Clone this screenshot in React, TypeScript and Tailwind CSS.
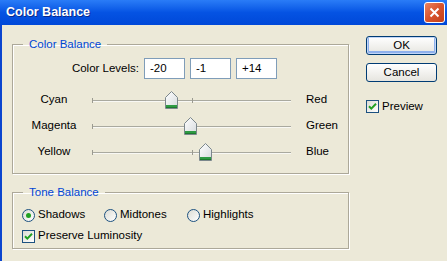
import React from 'react';

const levels = [
  { left: 'Cyan', right: 'Red', value: -20 },
  { left: 'Magenta', right: 'Green', value: -1 },
  { left: 'Yellow', right: 'Blue', value: 14 },
];

const TRACK_W = 199;

const Thumb = ({ value }: { value: number }) => {
  const x = ((value + 100) / 200) * TRACK_W;
  return (
    <svg
      width="13"
      height="18"
      viewBox="0 0 13 18"
      className="absolute top-[4px]"
      style={{ left: Math.round(x - 6.5) }}
    >
      <defs>
        <linearGradient id="thumbFill" x1="0" y1="0" x2="1" y2="1">
          <stop offset="0" stopColor="#ffffff" />
          <stop offset="1" stopColor="#d5dadd" />
        </linearGradient>
      </defs>
      <path d="M6.5 0.5 L12.5 6.5 V17.5 H0.5 V6.5 Z" fill="url(#thumbFill)" stroke="#7b878c" />
      <rect x="1" y="14" width="11" height="3" fill="#2e9a43" />
      <rect x="1" y="16" width="11" height="1" fill="#1d7a2f" />
    </svg>
  );
};

const Slider = ({ left, right, value }: { left: string; right: string; value: number }) => (
  <div className="flex h-[26px] items-center">
    <div className="w-[79px] pl-[3px] text-center">{left}</div>
    <div className="relative h-[26px] w-[199px]">
      <div className="absolute left-0 right-0 top-[13px] h-[2px] border-t border-b border-t-[#a9a99f] border-b-[#f8f8f4]" />
      <div className="absolute left-0 top-[11px] h-[5px] w-px bg-[#9a9a90]" />
      <div className="absolute left-[100px] top-[11px] h-[5px] w-px bg-[#9a9a90]" />
      <Thumb value={value} />
    </div>
    <div className="ml-[15px]">{right}</div>
  </div>
);

const Radio = ({ checked }: { checked?: boolean }) => (
  <span className="flex h-[13px] w-[13px] items-center justify-center rounded-full border border-[#1c5180] bg-gradient-to-br from-[#dcdcd4] to-white">
    {checked && <span className="h-[5px] w-[5px] rounded-full bg-[#21a121]" />}
  </span>
);

const Check = () => (
  <span className="flex h-[13px] w-[13px] items-center justify-center border border-[#1c5180] bg-gradient-to-br from-[#dcdcd4] to-white">
    <svg width="9" height="9" viewBox="0 0 9 9">
      <path d="M1 4.2 L3.3 6.6 L8 1.8" fill="none" stroke="#21a121" strokeWidth="2" />
    </svg>
  </span>
);

const groupCls =
  'border border-[#aca899] [box-shadow:inset_1px_1px_0_#fff,1px_1px_0_#fff]';

const Legend = ({ children }: { children: React.ReactNode }) => (
  <legend className="ml-[10px] px-[6px] leading-[14px] text-[#0046d5]">{children}</legend>
);

export default function App() {
  return (
    <div className="flex h-[261px] w-[447px] flex-col overflow-hidden bg-[#ece9d8] font-['Liberation_Sans',Arial,sans-serif] text-[11.5px] text-black">
      <div className="flex h-[25px] items-center bg-gradient-to-b from-[#2a7cf7] via-[#0553e3] to-[#0048d8] pl-[6px]">
        <span className="text-[12.5px] font-bold text-white [text-shadow:1px_1px_0_#0a2a8a]">
          Color Balance
        </span>
        <div className="ml-auto mr-[2px] flex h-[21px] w-[21px] items-center justify-center rounded-[3px] border border-white bg-gradient-to-br from-[#e9825f] via-[#d8532c] to-[#c2401c]">
          <svg width="11" height="11" viewBox="0 0 11 11">
            <path d="M1.5 1.5 L9.5 9.5 M9.5 1.5 L1.5 9.5" stroke="#fff" strokeWidth="2" />
          </svg>
        </div>
      </div>

      <div className="flex flex-1 border-l-2 border-[#0b45cf] pl-[10px] pt-[12px]">
        <div className="flex w-[337px] flex-col">
          <fieldset className={`${groupCls} pb-[8px]`}>
            <Legend>Color Balance</Legend>
            <div className="mt-[7px] flex items-center gap-[5px]">
              <div className="w-[126px] text-right">Color Levels:</div>
              {['-20', '-1', '+14'].map((v) => (
                <div
                  key={v}
                  className="flex h-[21px] w-[41px] items-center border border-[#7f9db9] bg-white pl-[5px]"
                >
                  {v}
                </div>
              ))}
            </div>
            <div className="mt-[8px] flex flex-col">
              {levels.map((l) => (
                <Slider key={l.left} {...l} />
              ))}
            </div>
          </fieldset>

          <fieldset className={`${groupCls} mt-[11px] pb-[4px]`}>
            <Legend>Tone Balance</Legend>
            <div className="mt-[8px] flex h-[16px] items-center pl-[9px]">
              <div className="flex w-[82px] items-center gap-[3px]">
                <Radio checked />
                <span>Shadows</span>
              </div>
              <div className="flex w-[83px] items-center gap-[3px]">
                <Radio />
                <span>Midtones</span>
              </div>
              <div className="flex items-center gap-[3px]">
                <Radio />
                <span>Highlights</span>
              </div>
            </div>
            <div className="mt-[5px] flex h-[16px] items-center gap-[3px] pl-[9px]">
              <Check />
              <span>Preserve Luminosity</span>
            </div>
          </fieldset>
        </div>

        <div className="ml-[17px] mt-[-1px] flex w-[71px] flex-col">
          <button className="h-[19px] rounded-[3px] border border-[#003c74] bg-gradient-to-b from-white to-[#e6e5df] [box-shadow:inset_0_0_0_1px_#c2d6f7,inset_0_-1px_0_2px_#8fb1ec]">
            OK
          </button>
          <button className="mt-[8px] h-[19px] rounded-[3px] border border-[#003c74] bg-gradient-to-b from-white to-[#e6e5df]">
            Cancel
          </button>
          <div className="mt-[16px] flex items-center gap-[3px]">
            <Check />
            <span>Preview</span>
          </div>
        </div>
      </div>
    </div>
  );
}
